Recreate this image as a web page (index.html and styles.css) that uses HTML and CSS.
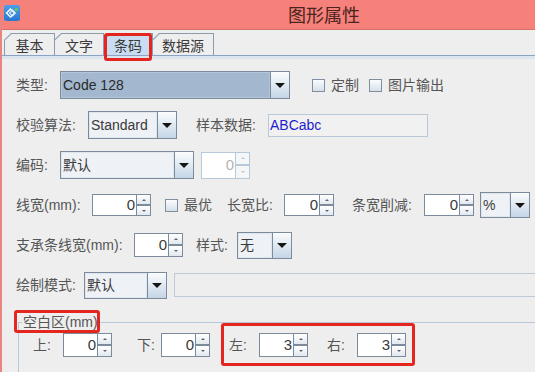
FILE: index.html
```html
<!DOCTYPE html>
<html lang="zh">
<head>
<meta charset="utf-8">
<title>图形属性</title>
<link rel="stylesheet" href="styles.css">
</head>
<body>
<div class="window">
  <div class="titlebar">
    <svg class="appicon" viewBox="0 0 16 16" width="16" height="16">
      <defs>
        <linearGradient id="ig" x1="0" y1="0" x2="0" y2="1">
          <stop offset="0" stop-color="#4aa0ec"/>
          <stop offset="1" stop-color="#2a76d0"/>
        </linearGradient>
      </defs>
      <rect x="0" y="0" width="16" height="16" rx="2.5" fill="url(#ig)"/>
      <path d="M2.5 8 L6.5 4 L10.5 8 L6.5 12 Z" fill="none" stroke="#ffffff" stroke-width="1.3"/>
      <path d="M5.5 8 L8.5 5 L11.5 8 L8.5 11 Z" fill="none" stroke="#d8ecff" stroke-width="1.1"/>
      <circle cx="12.3" cy="4.6" r="1.7" fill="#6cc84e"/>
    </svg>
    <div class="title">图形属性</div>
  </div>

  <div class="tabs">
    <div class="tab t1"><span>基本</span></div>
    <div class="tab t2"><span>文字</span></div>
    <div class="tab t3 active"><span>条码</span></div>
    <div class="tab t4"><span>数据源</span></div>
  </div>
  <div class="tabline"></div>

  <div class="panel">
    <div class="row">
      <span class="lbl w44">类型:</span>
      <div class="combo w230 h28 selected">
        <div class="cb-field latin">Code 128</div>
        <div class="cb-btn"><i class="tri"></i></div>
      </div>
      <label class="chk ml22"><i class="box"></i><span>定制</span></label>
      <label class="chk ml10"><i class="box"></i><span>图片输出</span></label>
    </div>

    <div class="row">
      <span class="lbl w72">校验算法:</span>
      <div class="combo w89 h28">
        <div class="cb-field latin">Standard</div>
        <div class="cb-btn"><i class="tri"></i></div>
      </div>
      <span class="lbl w72 ml19">样本数据:</span>
      <div class="tfield w160 h23 latin">ABCabc</div>
    </div>

    <div class="row">
      <span class="lbl w44">编码:</span>
      <div class="combo w134 h28">
        <div class="cb-field">默认</div>
        <div class="cb-btn"><i class="tri"></i></div>
      </div>
      <div class="spin disabled h27 ml7">
        <div class="sp-field f34">0</div>
        <div class="sp-btns"><span class="up"></span><span class="dn"></span></div>
      </div>
    </div>

    <div class="row">
      <span class="lbl w76">线宽(mm):</span>
      <div class="spin h22">
        <div class="sp-field f44">0</div>
        <div class="sp-btns"><span class="up"></span><span class="dn"></span></div>
      </div>
      <label class="chk ml14 w62"><i class="box"></i><span>最优</span></label>
      <span class="lbl w57">长宽比:</span>
      <div class="spin h22">
        <div class="sp-field f35">0</div>
        <div class="sp-btns"><span class="up"></span><span class="dn"></span></div>
      </div>
      <span class="lbl w72 ml18">条宽削减:</span>
      <div class="spin h22">
        <div class="sp-field f35">0</div>
        <div class="sp-btns"><span class="up"></span><span class="dn"></span></div>
      </div>
      <div class="combo w50 h26 ml6">
        <div class="cb-field latin">%</div>
        <div class="cb-btn"><i class="tri"></i></div>
      </div>
    </div>

    <div class="row">
      <span class="lbl w118">支承条线宽(mm):</span>
      <div class="spin h24">
        <div class="sp-field f34">0</div>
        <div class="sp-btns"><span class="up"></span><span class="dn"></span></div>
      </div>
      <span class="lbl w41 ml13">样式:</span>
      <div class="combo w55 h27">
        <div class="cb-field">无</div>
        <div class="cb-btn"><i class="tri"></i></div>
      </div>
    </div>

    <div class="row">
      <span class="lbl w68">绘制模式:</span>
      <div class="combo w83 h27">
        <div class="cb-field">默认</div>
        <div class="cb-btn"><i class="tri"></i></div>
      </div>
      <div class="dfield ml7 h24"></div>
    </div>

    <fieldset class="margins">
      <legend>空白区(mm)</legend>
      <div class="frow">
        <span class="lbl w30">上:</span>
        <div class="spin h24">
          <div class="sp-field f34">0</div>
          <div class="sp-btns"><span class="up"></span><span class="dn"></span></div>
        </div>
        <span class="lbl w24 ml25">下:</span>
        <div class="spin h24">
          <div class="sp-field f34">0</div>
          <div class="sp-btns"><span class="up"></span><span class="dn"></span></div>
        </div>
        <span class="lbl w30 ml19">左:</span>
        <div class="spin h24">
          <div class="sp-field f34">3</div>
          <div class="sp-btns"><span class="up"></span><span class="dn"></span></div>
        </div>
        <span class="lbl w30 ml19">右:</span>
        <div class="spin h24">
          <div class="sp-field f34">3</div>
          <div class="sp-btns"><span class="up"></span><span class="dn"></span></div>
        </div>
      </div>
    </fieldset>
  </div>

  <div class="mark mark-tab"></div>
  <div class="mark mark-legend"></div>
  <div class="mark mark-lr"></div>
</div>
</body>
</html>
```

FILE: styles.css
```css
* { box-sizing: border-box; }
html, body { margin: 0; padding: 0; }
body {
  width: 535px;
  height: 372px;
  overflow: hidden;
  background: #eeeeee;
  font-family: "Liberation Sans", "Noto Sans CJK SC", sans-serif;
  font-size: 14px;
  color: #555555;
}

.window {
  position: relative;
  width: 535px;
  height: 372px;
  overflow: hidden;
  background: #eeeeee;
  border-left: 2px solid #e9857f;
}

/* title bar */
.titlebar {
  height: 30px;
  background: #f6817a;
  border-bottom: 1px solid #d4706a;
  display: flex;
  align-items: flex-start;
  padding-left: 2px;
}
.appicon { margin-top: 5px; flex: none; }
.title {
  margin-left: 268px;
  margin-top: 3px;
  font-family: "Noto Sans CJK SC", sans-serif;
  font-size: 18px;
  line-height: 22px;
  color: #4a2421;
}

/* tabs */
.tabs {
  display: flex;
  align-items: flex-end;
  margin-top: 3px;
  padding-left: 2px;
  height: 23px;
  border-bottom: 1px solid #8ba4c6;
}
.tab {
  height: 22px;
  margin-left: -1px;
  padding: 1px 1px 0 1px;
  background: #8d9cac;
  clip-path: polygon(0 7px, 7px 0, 100% 0, 100% 100%, 0 100%);
}
.tab span {
  display: flex;
  height: 100%;
  align-items: center;
  justify-content: center;
  padding-top: 2px;
  background: #eeeeee;
  color: #3a3a3a;
  font-size: 14px;
  line-height: 16px;
  clip-path: polygon(0 6.6px, 6.6px 0, 100% 0, 100% 100%, 0 100%);
}
.tab.active span { background: #c9dcf1; }
.t1 { width: 51px; margin-left: 0; }
.t2 { width: 50px; }
.t3 { width: 50px; }
.t4 { width: 62px; }
.tabline { height: 3px; background: #dbe5f0; }

/* panel */
.panel { padding-top: 6px; }
.row {
  display: flex;
  align-items: center;
  height: 40px;
  padding-left: 14px;
  line-height: 16px;
}
.lbl { flex: none; white-space: nowrap; font-size: 14px; color: #555555; }
.latin { font-family: "Liberation Sans", sans-serif; }

/* widths / spacing */
.w24 { width: 24px; } .w30 { width: 30px; } .w41 { width: 41px; }
.w44 { width: 44px; } .w57 { width: 57px; } .w62 { width: 62px; }
.w68 { width: 68px; } .w72 { width: 72px; } .w76 { width: 76px; }
.w118 { width: 118px; }
.w50 { width: 50px; } .w55 { width: 55px; } .w83 { width: 83px; }
.w89 { width: 89px; } .w134 { width: 134px; } .w160 { width: 160px; }
.w230 { width: 230px; }
.h22 { height: 22px; } .h23 { height: 23px; } .h24 { height: 24px; }
.h26 { height: 26px; } .h27 { height: 27px; } .h28 { height: 28px; }
.ml6 { margin-left: 6px; } .ml7 { margin-left: 7px; } .ml10 { margin-left: 10px; }
.ml13 { margin-left: 13px; } .ml14 { margin-left: 14px; } .ml18 { margin-left: 18px; }
.ml19 { margin-left: 19px; } .ml22 { margin-left: 22px; } .ml25 { margin-left: 25px; }

/* combo box */
.combo {
  flex: none;
  display: flex;
  border: 1px solid #7b8b9c;
  background: #eef1f5;
}
.cb-field {
  flex: 1;
  display: flex;
  align-items: center;
  padding-left: 2px;
  font-size: 14px;
  color: #3a3a3a;
  box-shadow: inset 0 0 0 1px #dfe6ee;
  overflow: hidden;
  white-space: nowrap;
}
.combo.selected .cb-field {
  background: #a3b8ce;
  box-shadow: inset 0 0 0 1px #b3c5d8;
  color: #2a2a2a;
}
.cb-btn {
  flex: none;
  width: 19px;
  border-left: 1px solid #7b8b9c;
  background: linear-gradient(#fbfcfd, #c4d5e7);
  display: flex;
  align-items: center;
  justify-content: center;
}
.tri {
  width: 0;
  height: 0;
  margin-top: 1px;
  border-left: 5px solid transparent;
  border-right: 5px solid transparent;
  border-top: 5px solid #151515;
}

/* checkbox */
.chk { flex: none; display: flex; align-items: center; gap: 6px; }
.box {
  width: 13px;
  height: 13px;
  border: 1px solid #7f8fa0;
  background: linear-gradient(#fbfcfe, #d6e0ea);
}
.chk span { font-size: 14px; color: #555555; }

/* text fields */
.tfield {
  flex: none;
  display: flex;
  align-items: center;
  padding-left: 1px;
  border: 1px solid #b7c8d9;
  background: #f1f1f1;
  color: #1e1ec8;
  font-size: 14px;
}
.dfield {
  flex: none;
  width: 380px;
  border: 1px solid #bccbd9;
  background: #eeeeee;
}

/* spinner */
.spin { flex: none; display: flex; }
.sp-field {
  display: flex;
  align-items: center;
  justify-content: flex-end;
  padding-right: 1px;
  border: 1px solid #7b8b9c;
  border-right: none;
  background: #ffffff;
  font-size: 15px;
  color: #3a3a3a;
}
.f34 { width: 34px; } .f35 { width: 35px; } .f44 { width: 44px; }
.sp-btns {
  width: 15px;
  display: flex;
  flex-direction: column;
  border: 1px solid #7b8b9c;
}
.sp-btns span {
  flex: 1;
  position: relative;
  background: linear-gradient(#ffffff, #e2e8ef);
}
.sp-btns .up { border-bottom: 2px solid #7b8b9c; }
.sp-btns span::after {
  content: "";
  position: absolute;
  left: 50%;
  top: 50%;
  margin-left: -2px;
  border-left: 2px solid transparent;
  border-right: 2px solid transparent;
}
.sp-btns .up::after { margin-top: -1px; border-bottom: 2px solid #5c6670; }
.sp-btns .dn::after { margin-top: -1px; border-top: 2px solid #5c6670; }

.spin.disabled .sp-field { border-color: #b7c8d9; color: #b4b4b4; background: #ffffff; }
.spin.disabled .sp-btns { border-color: #b7c8d9; }
.spin.disabled .sp-btns .up { border-bottom-color: #b7c8d9; }
.spin.disabled .sp-btns span { background: #f4f6f8; }
.spin.disabled .sp-btns .up::after { border-bottom-color: #c0c6cc; }
.spin.disabled .sp-btns .dn::after { border-top-color: #c0c6cc; }

/* fieldset */
.margins {
  margin: 9px 0 0 16px;
  padding: 0;
  width: 540px;
  height: 80px;
  border: 1px solid #b7c8d9;
  border-right: none;
}
.margins legend {
  margin-left: 3px;
  padding: 0 1px;
  font-size: 14px;
  line-height: 16px;
  color: #555555;
}
.frow {
  display: flex;
  align-items: center;
  margin-top: 3px;
  padding-left: 14px;
  line-height: 16px;
}

/* red annotation marks */
.mark {
  position: absolute;
  border: 3px solid #e5261f;
  border-radius: 3px;
}
.mark-tab { left: 102px; top: 33px; width: 48px; height: 28px; }
.mark-legend { left: 12px; top: 310px; width: 86px; height: 23px; }
.mark-lr { left: 219px; top: 323px; width: 194px; height: 43px; }
```
